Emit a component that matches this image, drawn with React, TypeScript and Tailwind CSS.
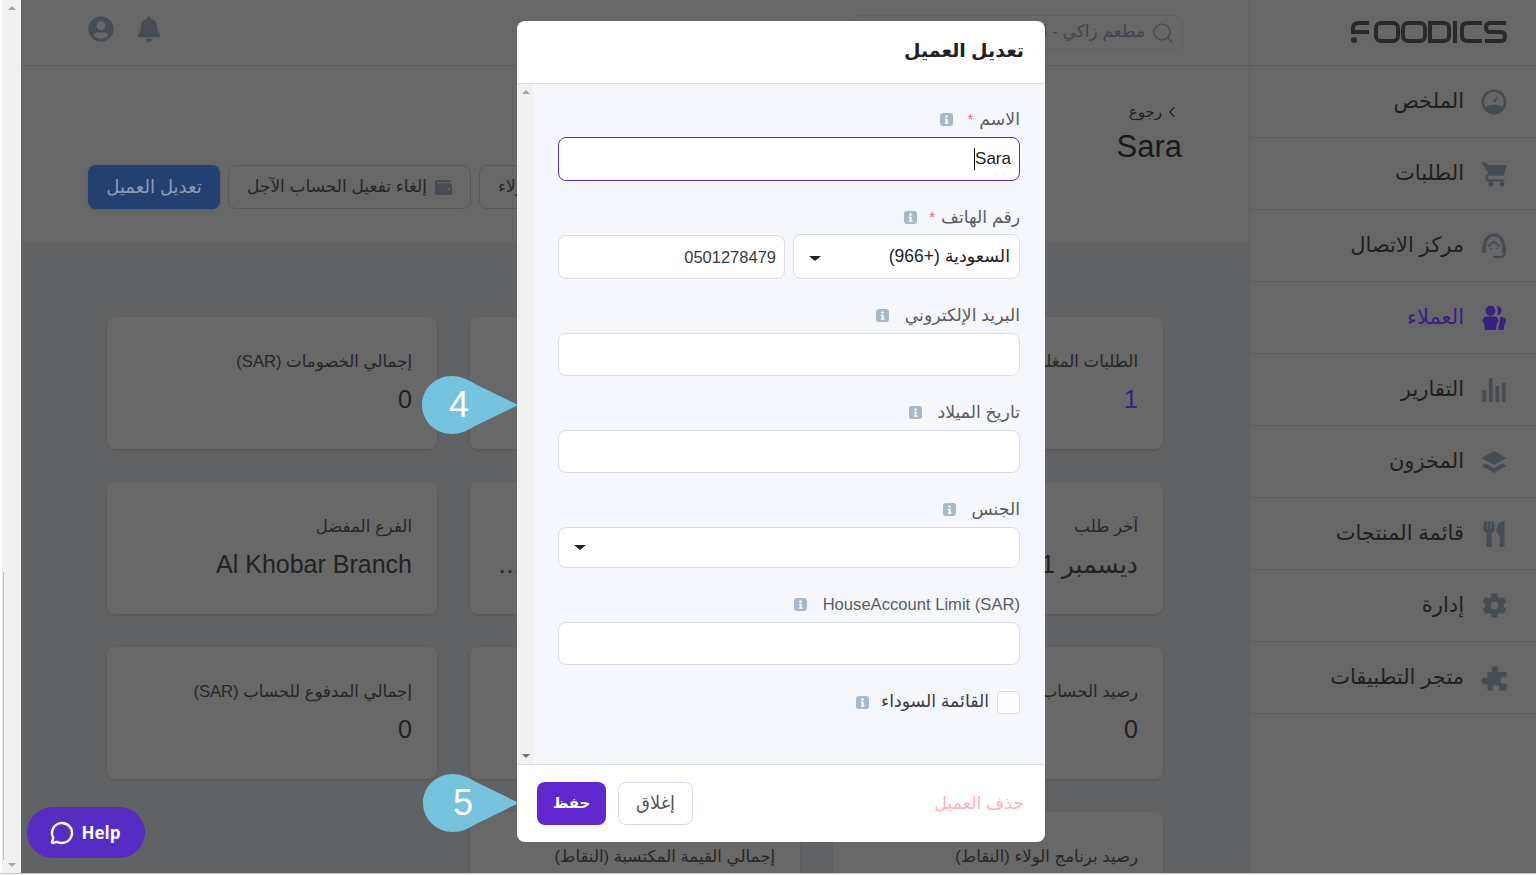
import { ChevronLeft, MessageCircle, Search } from "lucide-react";
import { FaBell, FaCog, FaUserCircle, FaUtensils, FaWallet } from "react-icons/fa";

function GaugeIcon() {
  return (
    <svg viewBox="0 0 26 26" className="w-[26px] h-[26px]" fill="none">
      <circle cx="13" cy="13" r="11.2" stroke="currentColor" strokeWidth="2.6" />
      <path d="M17.5 6.500 L12 11.500 L14.400 13.800 Z" fill="currentColor" />
      <path d="M4.500 18.500 C8 14.500 18 14.500 21.500 18.500 C19.500 21.500 16 23 13 23 C10 23 6.500 21.500 4.500 18.500 Z" fill="currentColor" />
    </svg>
  );
}

function CartIcon() {
  return (
    <svg viewBox="0 0 26 26" className="w-[26px] h-[26px]" fill="currentColor">
      <path d="M0.500 1.500 H5.500 L6.500 4 H25.500 L22.800 14.800 H9.200 Z" />
      <path d="M8.500 13 C4.500 14 4.500 19.500 8.500 19.500 H23.500" fill="none" stroke="currentColor" strokeWidth="2.200" />
      <circle cx="10" cy="23" r="2.500" />
      <circle cx="21" cy="23" r="2.500" />
    </svg>
  );
}

function HeadsetIcon() {
  return (
    <svg viewBox="0 0 26 26" className="w-[26px] h-[26px]" fill="none">
      <path d="M3.500 13 C3.500 6 8 2 13 2 C18 2 22.500 6 22.500 13" stroke="currentColor" strokeWidth="3" />
      <path d="M7 13.500 L13 8.500 L19 13.500" stroke="currentColor" strokeWidth="1.800" />
      <circle cx="10" cy="15.500" r="1" fill="currentColor" />
      <circle cx="16" cy="15.500" r="1" fill="currentColor" />
      <rect x="1" y="12.500" width="4" height="7.500" rx="1.500" fill="currentColor" />
      <rect x="21" y="12.500" width="4" height="7.500" rx="1.500" fill="currentColor" />
      <path d="M23.500 20 C23.500 22.500 22 24 19 24 L12 24" stroke="currentColor" strokeWidth="2.200" />
    </svg>
  );
}

function UsersIcon() {
  return (
    <svg viewBox="0 0 26 26" className="w-[26px] h-[26px]" fill="currentColor">
      <circle cx="9.500" cy="5.800" r="5" />
      <path d="M15.500 1 C19 1.200 20.500 3.500 20.500 5.800 C20.500 8 19 10 16 10.600 C17.600 8.200 17.600 3.400 15.500 1 Z" />
      <path d="M1.500 16 C1.500 13 4 11.600 6.500 11.600 L12.500 11.600 C15 11.600 17.400 13 17.400 16 L15.800 18.600 L15 25 L4 25 L3.200 18.600 Z" />
      <path d="M19.500 12 C22.500 12 25.300 13.400 25 16.500 L23.600 19.500 L22.600 25 L17 25 L18.400 17.500 Z" />
    </svg>
  );
}

function BarsIcon() {
  return (
    <svg viewBox="0 0 26 26" className="w-[26px] h-[26px]" fill="currentColor">
      <rect x="1.500" y="13" width="3.600" height="12" />
      <rect x="8" y="1" width="3.600" height="24" />
      <rect x="14.500" y="9" width="3.600" height="16" />
      <rect x="21" y="6" width="3.600" height="19" />
    </svg>
  );
}

function LayersIcon() {
  return (
    <svg viewBox="0 0 26 26" className="w-[26px] h-[26px]" fill="currentColor">
      <path d="M13 2 L25.500 9 L13 16 L0.500 9 Z" />
      <path d="M4.500 14.400 L13 19.200 L21.500 14.400 L25.500 16.800 L13 24 L0.500 16.800 Z" />
    </svg>
  );
}

function PuzzleIcon() {
  return (
    <svg viewBox="0 0 26 26" className="w-[26px] h-[26px]" fill="currentColor">
      <path d="M6.500 7 H11 C12 7 11 5.800 10.800 4.500 C10.600 2.500 12 1 14 1 C16 1 17.400 2.500 17.200 4.500 C17 5.800 16 7 17 7 H24 C25 7 25.500 7.500 25.500 8.500 V12 C25.500 13.300 24.300 12.300 23 12.100 C21 11.900 19.500 13.500 19.500 15.500 C19.500 17.500 21 19 23 18.800 C24.300 18.600 25.500 17.700 25.500 19 V24 C25.500 25 25 25.500 24 25.500 H18.500 C17.200 25.500 18.200 24.300 18.300 23 C18.500 21.300 16.800 20 15 20 C13.200 20 11.500 21.300 11.700 23 C11.800 24.300 12.800 25.500 11.500 25.500 H8 C7 25.500 6.500 25 6.500 24 V19.500 C6.500 18.300 5.300 19.500 4 19.500 C2 19.500 0.500 18 0.500 16 C0.500 14 2 12.500 4 12.500 C5.300 12.500 6.500 13.700 6.500 12.500 Z" />
    </svg>
  );
}

function FoodicsLogo() {
  return (
    <svg viewBox="0 0 156 24" className="w-[156px] h-[24px] -mt-[2px]" fill="none" stroke="#292929" strokeWidth="4">
      <path d="M18 3 L8 3 C4 3 2 5 2 8 L2 12 L18 12" />
      <circle cx="3" cy="20" r="3" fill="#292929" stroke="none" />
      <rect x="25" y="3" width="22" height="18" rx="5" />
      <rect x="52" y="3" width="22" height="18" rx="5" />
      <path d="M79 3 L92 3 C96 3 98 5 98 8 L98 16 C98 19 96 21 92 21 L79 21 Z" />
      <line x1="104" y1="1" x2="104" y2="23" />
      <path d="M131 3 L117 3 C113 3 111 5 111 8 L111 16 C111 19 113 21 117 21 L131 21" />
      <path d="M155 3 L139 3 C136 3 135 5 135 7.500 C135 10 136 12 139 12 L150 12 C153 12 154 14 154 16.500 C154 19 153 21 150 21 L134 21" />
    </svg>
  );
}

function InfoBadge() {
  return (
    <svg viewBox="0 0 13 13" className="w-[13px] h-[13px] shrink-0">
      <rect width="13" height="13" rx="3" fill="#a9b7cb" />
      <circle cx="6.500" cy="3.500" r="1.300" fill="#fff" />
      <path d="M4.800 5.800 H7.600 V9.600 H8.500 V10.800 H4.800 V9.600 H5.700 V7 H4.800 Z" fill="#fff" />
    </svg>
  );
}

function Callout({ n, className, numClass }: { n: string; className: string; numClass: string }) {
  return (
    <div dir="ltr" className={"absolute w-[96px] h-[60px] flex items-center " + className}>
      <svg viewBox="0 0 96 60" className="absolute inset-0 w-[96px] h-[60px]">
        <path d="M96 30 L53 9 C45 4 38 1 30 1 C13 1 0 14 0 30 C0 46 13 59 30 59 C38 59 45 56 53 51 Z" fill="#76c3de" />
      </svg>
      <span className={"relative text-center text-[36px] leading-none text-white " + numClass}>{n}</span>
    </div>
  );
}

const nav = [
  { label: "الملخص", icon: <GaugeIcon /> },
  { label: "الطلبات", icon: <CartIcon /> },
  { label: "مركز الاتصال", icon: <HeadsetIcon /> },
  { label: "العملاء", icon: <UsersIcon />, active: true },
  { label: "التقارير", icon: <BarsIcon /> },
  { label: "المخزون", icon: <LayersIcon /> },
  { label: "قائمة المنتجات", icon: <FaUtensils size={26} /> },
  { label: "إدارة", icon: <FaCog size={25} /> },
  { label: "متجر التطبيقات", icon: <PuzzleIcon /> },
];

const cards = [
  { label: "الطلبات المغلقة", value: "1", purple: true },
  { label: "إجمالي الطلبات (SAR)", value: "0" },
  { label: "إجمالي الخصومات (SAR)", value: "0" },
  { label: "آخر طلب", value: "ديسمبر 1, 2021" },
  { label: "الطلب المفضل", value: "منتج طويل جدا بعنوان لا يتسع في البطاقة كاملة" },
  { label: "الفرع المفضل", value: "Al Khobar Branch" },
  { label: "رصيد الحساب الآجل", value: "0" },
  { label: "إجمالي الحساب الآجل", value: "0" },
  { label: "إجمالي المدفوع للحساب (SAR)", value: "0" },
  { label: "رصيد برنامج الولاء (النقاط)", value: "0" },
  { label: "إجمالي القيمة المكتسبة (النقاط)", value: "0" },
];

function Label({ text, star, starGap }: { text: React.ReactNode; star?: boolean; starGap?: string }) {
  return (
    <div className="h-[24px] pt-[1px] flex items-center text-[17.3px] text-[#5c5c5c]">
      <span>{text}</span>
      {star ? <span className="mr-[6px] text-[#f0656f] text-[15px]">*</span> : null}
      <span className={star ? starGap : "mr-[16px]"}>
        <InfoBadge />
      </span>
    </div>
  );
}

const inputClass = "w-full h-[43px] bg-white border border-[#d8dde9] rounded-lg px-2 outline-none";

export default function App() {
  return (
    <div dir="rtl" className="relative flex flex-col w-full h-screen overflow-hidden bg-[#616263] text-[#222] [font-family:'Liberation_Sans','DejaVu_Sans',sans-serif]">
      <div className="flex flex-1 min-h-0">
        {/* sidebar */}
        <aside className="w-[287px] shrink-0 h-full bg-[#676767] border-l border-[#5c5d5e]">
          <div className="h-[66px] border-b border-[#5c5d5e] flex items-center pr-[29px]">
            <FoodicsLogo />
          </div>
          {nav.map((item) => (
            <div key={item.label} className="h-[72px] border-b border-[#5c5d5e] flex items-center pr-[29px]">
              <span className={"w-[26px] flex justify-center " + (item.active ? "text-[#39207f]" : "text-[#454c54]")}>{item.icon}</span>
              <span className={"mr-[17px] pb-[2px] text-[21px] " + (item.active ? "text-[#39207f]" : "text-[#1f1f1f]")}>{item.label}</span>
            </div>
          ))}
        </aside>

        {/* main */}
        <main className="flex-1 min-w-0 h-full overflow-hidden">
          <header className="h-[66px] bg-[#676767] border-b border-[#5c5d5e] flex items-center justify-between pr-[66px] pl-[67px]">
            <div className="w-[330px] h-[35px] border border-[#5c5f64] rounded-lg flex items-center pr-[7px] text-[#3f4651]">
              <Search size={24} strokeWidth={1.2} />
              <span className="mr-[6px] pb-[2px] text-[17px]">مطعم زاكي - الرياض</span>
            </div>
            <div className="flex items-center gap-[22px] text-[#454c54] pb-[8px]">
              <FaBell size={26} />
              <FaUserCircle size={26} />
            </div>
          </header>

          <section className="h-[176px] bg-[#676767] pr-[67px] pl-[67px] pt-[34px]">
            <div className="flex items-center text-[15px] text-[#222] h-[24px]">
              <ChevronLeft size={18} strokeWidth={1.5} className="mr-[1px]" />
              <span className="mr-[1px]">رجوع</span>
            </div>
            <div className="text-[31px] leading-[38px] mt-[4px] text-[#191919]">Sara</div>
            <div className="flex justify-end gap-[8px] -mt-[1px]">
              <button className="h-[44px] px-[18px] border border-[#55585d] rounded-lg text-[17px] text-[#262626] whitespace-nowrap">
                إلغاء تفعيل برنامج الولاء
              </button>
              <button className="h-[44px] w-[243px] border border-[#55585d] rounded-lg text-[17px] text-[#262626] flex items-center justify-center gap-[8px]">
                <FaWallet size={17} className="text-[#454c54]" />
                إلغاء تفعيل الحساب الآجل
              </button>
              <button className="h-[44px] w-[132px] bg-[#234170] rounded-lg text-[18px] text-[#8b9cb6] shadow-sm">تعديل العميل</button>
            </div>
          </section>

          <section className="grid grid-cols-3 gap-[33px] pt-[75px] pr-[86px] pl-[86px]">
            {cards.map((c) => (
              <div key={c.label} className="h-[132px] bg-[#686868] rounded-lg shadow-sm px-[25px] pt-[32px] min-w-0">
                <div className="text-[16.6px] leading-[24px] pt-[1px] text-[#262626] whitespace-nowrap overflow-hidden">{c.label}</div>
                <div className={"text-[25px] leading-[32px] mt-[9px] truncate " + (c.purple ? "text-[#39207f]" : "text-[#222]")}>{c.value}</div>
              </div>
            ))}
          </section>
        </main>

        {/* outer page scrollbar */}
        <div className="relative w-[21px] shrink-0 h-full bg-[#f1f1f1]">
          <svg viewBox="0 0 8 4" className="absolute top-[6px] left-[8px] w-[8px] h-[4px]">
            <path d="M0 4 L4 0 L8 4 Z" fill="#a3a3a3" />
          </svg>
          <svg viewBox="0 0 8 4" className="absolute bottom-[6px] left-[8px] w-[8px] h-[4px]">
            <path d="M0 0 L4 4 L8 0 Z" fill="#a3a3a3" />
          </svg>
          <div className="absolute left-0 top-0 w-[2px] h-full bg-white" />
          <div className="absolute left-[3px] top-[572px] w-[1px] h-[288px] bg-[#bdbdbd]" />
        </div>
      </div>

      {/* bottom window edge */}
      <div className="h-[2px] shrink-0 bg-[#f4f4f4] border-t border-[#c8c8c8]" />

      {/* help launcher */}
      <button className="absolute left-[27px] top-[807px] w-[118px] h-[51px] rounded-full bg-[#552dc2] text-white flex items-center justify-center gap-[8px] pr-[2px]" dir="ltr">
        <MessageCircle size={24} strokeWidth={2.4} />
        <span className="text-[17px] font-bold [font-family:'Open_Sans',sans-serif]">Help</span>
      </button>

      {/* tour callouts */}
      <Callout n="4" className="left-[422px] top-[375px]" numClass="w-[74px]" />
      <Callout n="5" className="left-[423px] top-[773px]" numClass="w-[80px]" />

      {/* modal */}
      <div className="absolute left-[517px] top-[21px] w-[528px] h-[821px] bg-white rounded-lg flex flex-col overflow-hidden">
        <div className="h-[63px] shrink-0 border-b border-[#d8dde9] flex items-center pr-[21px] pb-[2px]">
          <h2 className="text-[19px] font-bold text-[#222]">تعديل العميل</h2>
        </div>
        <div className="flex-1 min-h-0 flex bg-[#f5f7fc]">
          <div className="flex-1 flex flex-col gap-[24px] pt-[23px] pr-[25px] pl-[24px]">
            <div>
              <Label text="الاسم" star starGap="mr-[15px]" />
              <div className="mt-[6px] h-[44px] bg-white border border-[#5f27cd] rounded-lg flex items-center px-2 text-[17px] text-[#222]">
                <span dir="ltr">Sara</span>
                <span className="w-px h-[22px] bg-black" />
              </div>
            </div>
            <div>
              <Label text="رقم الهاتف" star starGap="mr-[12px]" />
              <div className="mt-[5px] grid grid-cols-2 items-end gap-[8px]">
                <div className="h-[45px] bg-white border border-[#d8dde9] rounded-lg flex items-center justify-between pr-[9px] pl-[15px] text-[17.5px] text-[#222]">
                  <span>السعودية (+966)</span>
                  <span className="w-0 h-0 border-x-[6px] border-x-transparent border-t-[5px] border-t-[#222] mt-[3px]" />
                </div>
                <input dir="rtl" readOnly value="0501278479" className="w-full h-[44px] bg-white border border-[#d8dde9] rounded-lg px-2 text-[16.5px] text-[#3a3a3a] outline-none" />
              </div>
            </div>
            <div>
              <Label text="البريد الإلكتروني" />
              <input readOnly className={"mt-[6px] block " + inputClass} />
            </div>
            <div>
              <Label text="تاريخ الميلاد" />
              <input readOnly className={"mt-[6px] block " + inputClass} />
            </div>
            <div>
              <Label text="الجنس" />
              <div className="mt-[6px] h-[41px] bg-white border border-[#d8dde9] rounded-lg flex items-center justify-end pl-[15px]">
                <span className="w-0 h-0 border-x-[6px] border-x-transparent border-t-[5px] border-t-[#222]" />
              </div>
            </div>
            <div>
              <Label text={<span dir="ltr" className="text-[16.6px]">HouseAccount Limit (SAR)</span>} />
              <input readOnly className={"mt-[6px] block " + inputClass} />
            </div>
            <div className="h-[26px] flex items-center text-[17.3px] text-[#3a3a3a]">
              <span className="w-[23px] h-[23px] bg-white border border-[#d8dde9] rounded" />
              <span className="mr-[8px]">القائمة السوداء</span>
              <span className="mr-[12px]">
                <InfoBadge />
              </span>
            </div>
          </div>
          <div className="relative w-[17px] shrink-0 bg-[#f1f1f1]">
            <svg viewBox="0 0 8 4" className="absolute top-[6px] left-[5px] w-[8px] h-[4px]">
              <path d="M0 4 L4 0 L8 4 Z" fill="#a3a3a3" />
            </svg>
            <svg viewBox="0 0 8 4" className="absolute bottom-[6px] left-[5px] w-[8px] h-[4px]">
              <path d="M0 0 L4 4 L8 0 Z" fill="#6f6f6f" />
            </svg>
          </div>
        </div>
        <div className="h-[78px] shrink-0 border-t border-[#d8dde9] flex items-center justify-between pr-[21px] pl-[20px]">
          <span className="text-[17.4px] text-[#ffb3b8]">حذف العميل</span>
          <div className="flex gap-[12px]">
            <button className="w-[75px] h-[43px] bg-white border border-[#d0d7e5] rounded-lg text-[18px] text-[#555]">إغلاق</button>
            <button className="w-[69px] h-[43px] bg-[#5f27cd] rounded-lg text-[15px] font-bold text-white">حفظ</button>
          </div>
        </div>
      </div>
    </div>
  );
}
